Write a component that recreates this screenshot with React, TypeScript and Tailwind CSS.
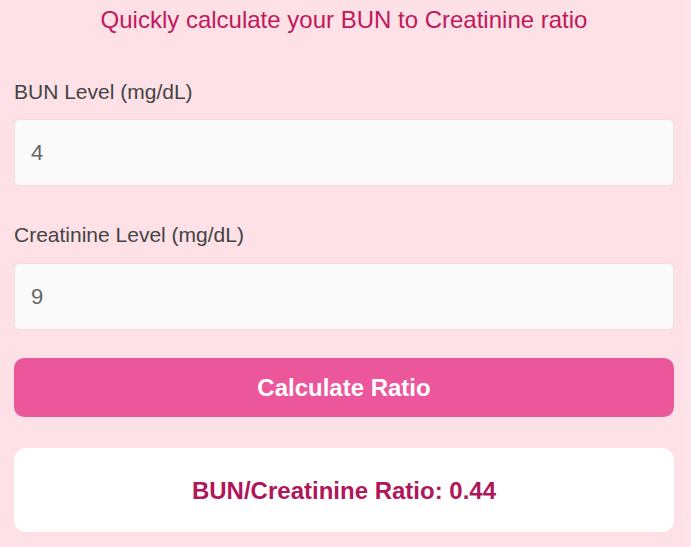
import { useState } from 'react'

export default function App() {
  const [bun, setBun] = useState('4')
  const [cre, setCre] = useState('9')
  const [ratio, setRatio] = useState<string | null>('0.44')

  const calculate = () => {
    const b = parseFloat(bun)
    const c = parseFloat(cre)
    if (!isNaN(b) && !isNaN(c) && c !== 0) setRatio((b / c).toFixed(2))
  }

  return (
    <div className="min-h-screen bg-[#ffe3ea] font-['Liberation_Sans',Arial,sans-serif]">
      <div className="w-[682px] min-h-screen bg-[#fee0e7] pl-[14px] pr-[8px] pt-[6px]">
        <h2 className="text-center text-[24px] leading-[28px] text-[#c2185b] font-normal">
          Quickly calculate your BUN to Creatinine ratio
        </h2>

        <div className="mt-[46px]">
          <label className="block text-[21px] leading-[24px] text-[#444] mb-[15px]">BUN Level (mg/dL)</label>
          <input
            value={bun}
            onChange={e => setBun(e.target.value)}
            className="block w-full h-[67px] px-4 bg-[#fafafa] border border-[#ecdde1] rounded-[5px] text-[22px] text-[#666] outline-none"
          />
        </div>

        <div className="mt-[37px]">
          <label className="block text-[21px] leading-[24px] text-[#444] mb-[16px]">Creatinine Level (mg/dL)</label>
          <input
            value={cre}
            onChange={e => setCre(e.target.value)}
            className="block w-full h-[67px] px-4 bg-[#fafafa] border border-[#ecdde1] rounded-[5px] text-[22px] text-[#666] outline-none"
          />
        </div>

        <button
          onClick={calculate}
          className="mt-[28px] w-full h-[59px] rounded-[10px] bg-[#ec569b] text-white text-[24px] font-bold"
        >
          Calculate Ratio
        </button>

        {ratio && (
          <div className="mt-[31px] h-[84px] rounded-[12px] bg-white flex items-center justify-center pt-[2px]">
            <p className="text-[24px] font-bold text-[#b0175a]">BUN/Creatinine Ratio: {ratio}</p>
          </div>
        )}
      </div>
    </div>
  )
}
